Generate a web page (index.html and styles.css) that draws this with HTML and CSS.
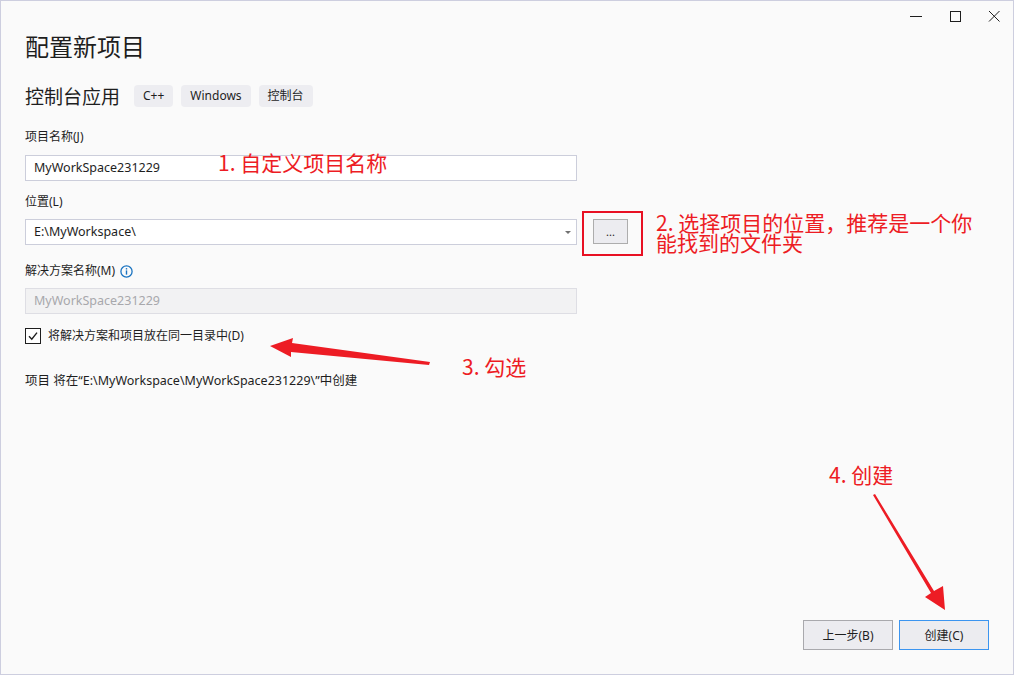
FILE: index.html
```html
<!DOCTYPE html>
<html lang="zh-CN">
<head>
<meta charset="utf-8">
<title>配置新项目</title>
<link rel="stylesheet" href="styles.css">
</head>
<body>
<div class="stage">
  <div class="window">
    <div class="titlebar">
      <span class="ctl">
        <svg width="14" height="14" viewBox="0 0 14 14"><line x1="1" y1="7.5" x2="13" y2="7.5" stroke="#1e1e1e" stroke-width="1"/></svg>
      </span>
      <span class="ctl">
        <svg width="14" height="14" viewBox="0 0 14 14"><rect x="2.5" y="2.5" width="10" height="10" fill="none" stroke="#1e1e1e" stroke-width="1"/></svg>
      </span>
      <span class="ctl">
        <svg width="14" height="14" viewBox="0 0 14 14"><path d="M2 2 L12.5 12.5 M12.5 2 L2 12.5" stroke="#1e1e1e" stroke-width="1"/></svg>
      </span>
    </div>
    <div class="content">
      <h1 class="title">配置新项目</h1>
      <div class="subtitle-row">
        <span class="subtitle">控制台应用</span>
        <span class="tag">C++</span>
        <span class="tag">Windows</span>
        <span class="tag">控制台</span>
      </div>

      <div class="label first">项目名称(J)</div>
      <div class="input">MyWorkSpace231229</div>

      <div class="label">位置(L)</div>
      <div class="loc-row">
        <div class="input combo">E:\MyWorkspace\<span class="caret"></span></div>
        <button class="browse">...</button>
      </div>

      <div class="label sol">解决方案名称(M)
        <svg class="info" width="13" height="13" viewBox="0 0 13 13"><circle cx="6.5" cy="6.5" r="5.6" fill="none" stroke="#1a73c0" stroke-width="1.3"/><rect x="5.8" y="5.4" width="1.4" height="4.2" fill="#1a73c0"/><rect x="5.8" y="3.1" width="1.4" height="1.4" fill="#1a73c0"/></svg>
      </div>
      <div class="input disabled">MyWorkSpace231229</div>

      <label class="check-row">
        <span class="checkbox">
          <svg width="14" height="14" viewBox="0 0 14 14"><path d="M3 7.3 L5.8 10.2 L11 3.6" fill="none" stroke="#1e1e1e" stroke-width="1.4"/></svg>
        </span>
        <span>将解决方案和项目放在同一目录中(D)</span>
      </label>

      <div class="info-line">项目 将在“E:\MyWorkspace\MyWorkSpace231229\”中创建</div>

      <div class="footer">
        <button class="btn">上一步(B)</button>
        <button class="btn primary">创建(C)</button>
      </div>
    </div>
  </div>

  <div class="overlay">
    <div class="note n1">1. 自定义项目名称</div>
    <div class="redbox"></div>
    <div class="note n2a">2. 选择项目的位置，推荐是一个你</div>
    <div class="note n2b">能找到的文件夹</div>
    <div class="note n3">3. 勾选</div>
    <div class="note n4">4. 创建</div>
    <svg class="arrows" width="1014" height="675" viewBox="0 0 1014 675">
      <polygon points="270,346 293,338 292,343 430,362 429,365 291,352 291,357" fill="#ed1c24"/>
      <polygon points="873,495 875,494 934,591 943,586 945,610 925,597 931,593" fill="#ed1c24"/>
    </svg>
  </div>
</div>
</body>
</html>
```

FILE: styles.css
```css
html, body {
  margin: 0;
  padding: 0;
  background: #fafafa;
}

body {
  font-family: "Noto Sans", "Noto Sans CJK SC", sans-serif;
  color: #1e1e1e;
}

.stage {
  position: relative;
  width: 1014px;
  height: 675px;
  overflow: hidden;
}

.window {
  box-sizing: border-box;
  width: 1014px;
  height: 675px;
  border: 1px solid #cdcedf;
  background: #fafafa;
  display: flex;
  flex-direction: column;
}

.titlebar {
  height: 29px;
  display: flex;
  justify-content: flex-end;
  align-items: flex-start;
  padding-top: 8px;
  padding-right: 12px;
  gap: 25px;
  box-sizing: border-box;
}

.ctl {
  width: 14px;
  height: 14px;
  display: block;
}
.ctl svg { display: block; }

.content {
  flex: 1;
  display: flex;
  flex-direction: column;
  padding: 0 24px 24px 24px;
}

.title {
  margin: 1px 0 0 0;
  font-family: "Noto Sans CJK SC", sans-serif;
  font-weight: 400;
  font-size: 24px;
  line-height: 30px;
  height: 30px;
}

.subtitle-row {
  margin-top: 23px;
  height: 24px;
  display: flex;
  align-items: center;
  gap: 8px;
}

.subtitle {
  font-family: "Noto Sans CJK SC", sans-serif;
  font-size: 19px;
  line-height: 24px;
  margin-right: 6px;
}

.tag {
  background: #ededf1;
  border-radius: 4px;
  height: 22px;
  line-height: 22px;
  padding: 0 9px;
  font-size: 12px;
}
.tag:first-of-type { padding: 0 10px; }

.label {
  font-size: 12px;
  line-height: 16px;
  height: 16px;
  margin-top: 13px;
  display: flex;
  align-items: center;
  gap: 5px;
}
.label.first { margin-top: 21px; }
.label.sol { margin-top: 18px; }

.info { display: block; }

.input {
  box-sizing: border-box;
  width: 552px;
  height: 26px;
  margin-top: 9px;
  border: 1px solid #cccedb;
  background: #ffffff;
  font-size: 12.5px;
  line-height: 24px;
  padding-left: 8px;
  position: relative;
}
.label.first + .input { margin-top: 10px; }

.input.disabled {
  background: #f2f2f3;
  border-color: #dedee4;
  color: #a8a8ac;
}

.loc-row {
  margin-top: 9px;
  display: flex;
  align-items: flex-start;
  gap: 16px;
}
.loc-row .input { margin-top: 0; }

.caret {
  position: absolute;
  right: 5px;
  top: 11px;
  width: 0;
  height: 0;
  border-left: 3px solid transparent;
  border-right: 3px solid transparent;
  border-top: 3px solid #717171;
}

.browse {
  box-sizing: border-box;
  width: 35px;
  height: 25px;
  background: #ececf0;
  border: 1px solid #adadad;
  font-family: inherit;
  font-size: 11px;
  line-height: 20px;
  padding: 0;
  color: #1e1e1e;
}

.check-row {
  margin-top: 14px;
  height: 16px;
  display: flex;
  align-items: center;
  gap: 7px;
  font-size: 12px;
  line-height: 16px;
}

.checkbox {
  box-sizing: border-box;
  width: 16px;
  height: 16px;
  border: 1px solid #1e1e1e;
  background: #ffffff;
  display: flex;
  align-items: center;
  justify-content: center;
}
.checkbox svg { display: block; }

.info-line {
  margin-top: 29px;
  font-size: 12.5px;
  line-height: 16px;
}

.footer {
  margin-top: auto;
  display: flex;
  justify-content: flex-end;
  gap: 6px;
}

.btn {
  box-sizing: border-box;
  width: 90px;
  height: 30px;
  background: #ececf0;
  border: 1px solid #a9a9ad;
  font-family: inherit;
  font-size: 12px;
  color: #1e1e1e;
  padding: 0;
}
.btn.primary {
  border-color: #3c95f0;
}

.overlay {
  position: absolute;
  left: 0;
  top: 0;
  width: 1014px;
  height: 675px;
  pointer-events: none;
}

.note {
  position: absolute;
  color: #ed1c24;
  font-family: "Noto Sans CJK SC", sans-serif;
  font-size: 21px;
  line-height: 22px;
  white-space: nowrap;
}
.n1 { left: 218px; top: 151px; }
.n2a { left: 656px; top: 212px; line-height: 20px; height: 20px; }
.n2b { left: 656px; top: 232px; line-height: 20px; height: 20px; }
.n3 { left: 462px; top: 355px; }
.n4 { left: 829px; top: 463px; }

.redbox {
  position: absolute;
  left: 582px;
  top: 211px;
  width: 57px;
  height: 41px;
  border: 2px solid #e81123;
}

.arrows {
  position: absolute;
  left: 0;
  top: 0;
}
```
